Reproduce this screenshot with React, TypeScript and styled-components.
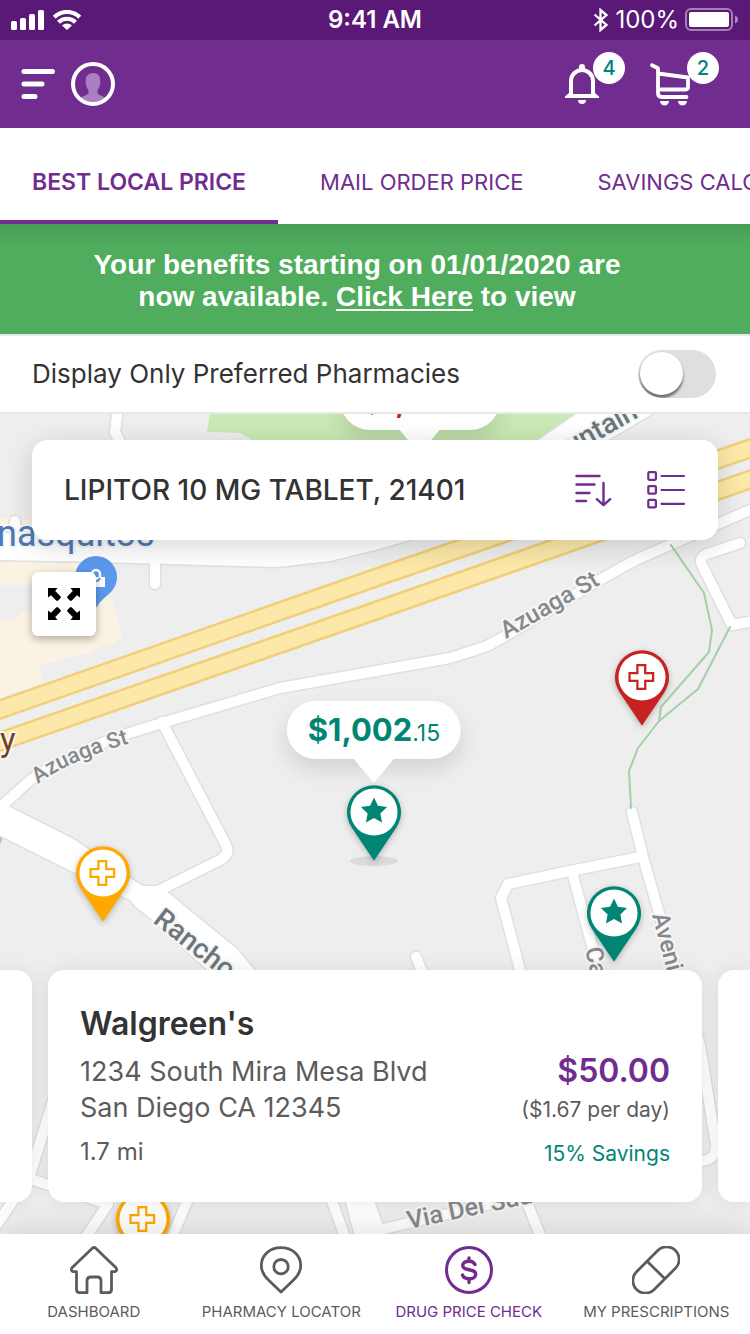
import React, { useState } from "react";
import styled, { createGlobalStyle, css } from "styled-components";

const color = {
  purpleDark: "#5a1976",
  purple: "#702c8f",
  green: "#4fad5d",
  teal: "#008575",
  red: "#c62222",
  amber: "#ffa800",
  ink: "#333333",
  grey: "#5c5c5c",
  line: "#e8e8e8",
};

const GlobalStyle = createGlobalStyle`
  *, *::before, *::after { box-sizing: border-box; }
  body {
    margin: 0;
    font-family: Inter, "Liberation Sans", sans-serif;
    color: ${color.ink};
    background: #ffffff;
  }
  button { border: 0; padding: 0; background: none; font: inherit; color: inherit; cursor: pointer; }
  svg { display: block; }
  h1, h2, p { margin: 0; }
`;

const Screen = styled.div`
  display: flex;
  flex-direction: column;
  min-height: 100vh;
  overflow: hidden;
`;

/* ---------- status bar and header ---------- */

const StatusBar = styled.div`
  display: grid;
  grid-template-columns: 1fr auto 1fr;
  align-items: center;
  height: 40px;
  padding: 0 11px;
  background: ${color.purpleDark};
  color: #ffffff;
  font-size: 24px;
  line-height: 32px;
`;

const StatusGroup = styled.div<{ $end?: boolean }>`
  display: flex;
  align-items: center;
  gap: ${(p) => (p.$end ? 6 : 8)}px;
  justify-content: ${(p) => (p.$end ? "flex-end" : "flex-start")};
`;

const Clock = styled.span`
  font-weight: 600;
`;

const Header = styled.header`
  display: flex;
  align-items: center;
  justify-content: space-between;
  height: 88px;
  padding: 0 58px 0 20px;
  background: ${color.purple};
  color: #ffffff;
`;

const HeaderGroup = styled.div<{ $gap: number }>`
  display: flex;
  align-items: center;
  gap: ${(p) => p.$gap}px;
`;

const IconButton = styled.button`
  position: relative;
  display: block;
`;

const Badge = styled.span`
  position: absolute;
  top: -10px;
  left: 33px;
  width: 32px;
  height: 32px;
  border-radius: 50%;
  background: #ffffff;
  color: ${color.teal};
  font-size: 20px;
  font-weight: 500;
  line-height: 32px;
  text-align: center;
`;

const CartBadge = styled(Badge)`
  left: 39px;
`;

/* ---------- tabs, banner, filter ---------- */

const Tabs = styled.nav`
  display: flex;
  gap: 10px;
  height: 96px;
  overflow: hidden;
  background: #ffffff;
`;

const Tab = styled.a<{ $active?: boolean }>`
  flex: none;
  display: flex;
  align-items: center;
  padding: 16px 32px 0;
  border-bottom: 4px solid ${(p) => (p.$active ? color.purple : "transparent")};
  color: ${color.purple};
  font-size: ${(p) => (p.$active ? 23 : 22)}px;
  font-weight: ${(p) => (p.$active ? 600 : 400)};
  line-height: 32px;
  text-decoration: none;
  white-space: nowrap;
`;

const Banner = styled.p`
  padding: 25px 72px 21px 36px;
  background: linear-gradient(rgba(0, 0, 0, 0.1), rgba(0, 0, 0, 0) 20px), ${color.green};
  color: #ffffff;
  font-family: "Liberation Sans", Arial, sans-serif;
  font-size: 28px;
  font-weight: 700;
  line-height: 32px;
  text-align: center;

  a {
    color: inherit;
    text-decoration-thickness: 2px;
    text-underline-offset: 3px;
  }
`;

const FilterRow = styled.label`
  display: flex;
  align-items: center;
  justify-content: space-between;
  height: 80px;
  padding: 0 34px 0 32px;
  border-top: 2px solid ${color.line};
  border-bottom: 2px solid ${color.line};
  background: #ffffff;
  font-size: 26px;
  line-height: 32px;
`;

const Switch = styled.input`
  appearance: none;
  width: 78px;
  height: 48px;
  margin: 0;
  padding: 2px;
  border-radius: 24px;
  background: #dfdfdf;
  overflow: hidden;
  cursor: pointer;

  &::before {
    content: "";
    display: block;
    width: 43px;
    height: 43px;
    border-radius: 50%;
    background: #ffffff;
    box-shadow: 0 3px 3px rgba(0, 0, 0, 0.55);
  }

  &:checked {
    background: ${color.purple};
  }

  &:checked::before {
    margin-left: auto;
  }
`;

/* ---------- map ---------- */

const MapArea = styled.main`
  position: relative;
  flex: 1;
  display: flex;
  flex-direction: column;
  align-items: stretch;
  min-height: 820px;
  overflow: hidden;
  background: #eeeeee;
`;

const MapDrawing = styled.svg`
  position: absolute;
  inset: 0;
  width: 100%;
  height: 100%;
`;

const Marker = styled.button<{ $x: number; $y: number }>`
  position: absolute;
  left: calc(50% + ${(p) => p.$x}px);
  top: ${(p) => p.$y}px;
  transform: translate(-50%, -100%);
`;

const PinSvg = styled.svg`
  overflow: visible;
  filter: drop-shadow(0 2px 3px rgba(0, 0, 0, 0.25));
`;

const Bubble = styled.div<{ $x: number; $y: number; $tone: string }>`
  position: absolute;
  left: calc(50% + ${(p) => p.$x}px);
  top: ${(p) => p.$y}px;
  transform: translate(-50%, -100%);
  display: flex;
  align-items: baseline;
  height: 58px;
  padding: 0 21px;
  border-radius: 29px;
  background: #ffffff;
  box-shadow: 0 10px 22px rgba(0, 0, 0, 0.12);
  color: ${(p) => p.$tone};
  font-size: 31px;
  font-weight: 700;
  line-height: 58px;
  white-space: nowrap;

  &::after {
    content: "";
    position: absolute;
    top: 100%;
    left: 50%;
    transform: translateX(-50%);
    border: 20px solid transparent;
    border-top: 24px solid #ffffff;
    border-bottom: 0;
  }

  small {
    font-size: 23px;
    font-weight: 400;
  }
`;

const SearchCard = styled.section`
  position: relative;
  display: flex;
  align-items: center;
  gap: 32px;
  height: 100px;
  margin: 26px 32px 0;
  padding: 0 32px;
  border-radius: 16px;
  background: #ffffff;
  box-shadow: 0 6px 28px rgba(0, 0, 0, 0.16);
  color: ${color.purple};
`;

const SearchTitle = styled.h1`
  flex: 1;
  color: ${color.ink};
  font-size: 28px;
  font-weight: 500;
`;

const ExpandButton = styled.button`
  position: relative;
  display: grid;
  place-items: center;
  width: 64px;
  height: 64px;
  margin: 32px;
  border-radius: 6px;
  background: #ffffff;
  box-shadow: 0 3px 8px rgba(0, 0, 0, 0.3);
  color: #000000;
`;

/* ---------- pharmacy cards ---------- */

const Carousel = styled.div`
  position: relative;
  display: grid;
  grid-template-columns: 32px 1fr 32px;
  gap: 16px;
  margin: auto 0 32px;
`;

const cardSurface = css`
  background: #ffffff;
  box-shadow: 0 0 20px rgba(0, 0, 0, 0.09);
`;

const CardEdge = styled.div<{ $side: "left" | "right" }>`
  ${cardSurface}
  border-radius: ${(p) => (p.$side === "left" ? "0 16px 16px 0" : "16px 0 0 16px")};
`;

const Card = styled.article`
  ${cardSurface}
  display: flex;
  justify-content: space-between;
  height: 232px;
  padding: 32px 32px 0;
  border-radius: 16px;
`;

const CardColumn = styled.div<{ $end?: boolean }>`
  display: flex;
  flex-direction: column;
  align-items: ${(p) => (p.$end ? "flex-end" : "flex-start")};
  padding-top: ${(p) => (p.$end ? 48 : 0)}px;
`;

const PharmacyName = styled.h2`
  margin-bottom: 8px;
  color: ${color.ink};
  font-size: 32px;
  font-weight: 600;
  line-height: 44px;
`;

const Address = styled.p`
  color: ${color.grey};
  font-size: 27px;
  line-height: 36px;
`;

const Detail = styled.p<{ $tone?: string }>`
  color: ${(p) => p.$tone ?? color.grey};
  font-size: 21px;
  line-height: 44px;
`;

const Distance = styled.p`
  padding-top: 8px;
  color: ${color.grey};
  font-size: 24px;
  line-height: 36px;
`;

const Price = styled.p`
  margin-bottom: -4px;
  color: ${color.purple};
  font-size: 32px;
  font-weight: 600;
  line-height: 42px;
`;

/* ---------- bottom navigation ---------- */

const BottomNav = styled.nav`
  position: relative;
  display: grid;
  grid-template-columns: repeat(4, 1fr);
  height: 100px;
  background: #ffffff;
  box-shadow: 0 -4px 28px rgba(0, 0, 0, 0.12);
`;

const NavItem = styled.a<{ $active?: boolean }>`
  display: flex;
  flex-direction: column;
  align-items: center;
  gap: 8px;
  padding-top: 12px;
  color: ${(p) => (p.$active ? color.purple : color.grey)};
  font-size: 15px;
  line-height: 20px;
  text-decoration: none;
  white-space: nowrap;
`;

/* ---------- drawings ---------- */

const stroke = {
  fill: "none",
  stroke: "currentColor",
  strokeLinecap: "round" as const,
  strokeLinejoin: "round" as const,
};

const SignalIcon = () => (
  <svg width="34" height="20" viewBox="0 0 34 20" fill="currentColor" aria-hidden="true">
    <rect x="0" y="11" width="6" height="9" rx="1.5" />
    <rect x="9" y="8" width="6" height="12" rx="1.5" />
    <rect x="18" y="4" width="6" height="16" rx="1.5" />
    <rect x="27" y="0" width="6" height="20" rx="1.5" />
  </svg>
);

const WifiIcon = () => (
  <svg width="28" height="20" viewBox="0 0 28 20" aria-hidden="true">
    <g fill="none" stroke="currentColor" strokeWidth="4.2">
      <path d="M1.3 7.200A18 18 0 0 1 26.700 7.200" />
      <path d="M5.500 12.300A12 12 0 0 1 22.500 12.300" />
    </g>
    <path d="M9 15.600a7 7 0 0 1 10 0L14 20z" fill="currentColor" />
  </svg>
);

const BluetoothIcon = () => (
  <svg width="16" height="24" viewBox="0 0 16 24" aria-hidden="true">
    <path d="M1.500 6.500L13.500 17l-6 5V2l6 5L1.500 17.500" fill="none" stroke="currentColor" strokeWidth="2.300" />
  </svg>
);

const BatteryIcon = () => (
  <svg width="54" height="24" viewBox="0 0 54 24" aria-hidden="true">
    <rect x="1" y="1" width="46" height="21" rx="5" fill="none" stroke="currentColor" strokeWidth="2" opacity=".45" />
    <rect x="4" y="4" width="40" height="15" rx="2" fill="currentColor" />
    <path d="M50 7.500c4 1.500 4 6.500 0 8z" fill="currentColor" opacity=".5" />
  </svg>
);

const MenuIcon = () => (
  <svg width="36" height="32" viewBox="0 0 36 32" {...stroke} strokeWidth="5" aria-hidden="true">
    <path d="M4 3.400h28.500M4 16h18M4 28.600h11" />
  </svg>
);

const AvatarIcon = () => (
  <svg width="44" height="44" viewBox="0 0 44 44" aria-hidden="true">
    <path
      d="M22 11c5 0 7.500 3.500 7.300 8.500-.1 4.500-1.300 6.500-2.800 8.500v3c0 2.500 8 3 9.500 6.500-7 5.500-21 5.500-28 0 1.500-3.500 9.500-4 9.500-6.500v-3c-1.500-2-2.700-4-2.800-8.500C14.500 14.500 17 11 22 11z"
      fill="#ac80c0"
    />
    <circle cx="22" cy="22" r="20" fill="none" stroke="currentColor" strokeWidth="4" />
  </svg>
);

const BellIcon = () => (
  <svg width="44" height="44" viewBox="0 0 44 44" aria-hidden="true">
    <g fill="none" stroke="currentColor" strokeWidth="4">
      <path d="M11 33V19a11 11 0 0 1 22 0v14" />
    </g>
    <path d="M19 7V5a3 3 0 0 1 6 0v2zM9 31l-4 3.500V36h34v-1.500L35 31v1H9zM18 38h8a4 4 0 0 1-8 0z" fill="currentColor" />
  </svg>
);

const CartIcon = () => (
  <svg width="44" height="44" viewBox="0 0 44 44" aria-hidden="true">
    <g {...stroke} strokeWidth="3.800">
      <path d="M4 3.200l6 3V31q0 4 4 4h24.500M10 11.500l30 4V25q0 2.500-2.500 2.500H10" />
    </g>
    <path d="M12 39h9a4.500 4.500 0 0 1-9 0zM30 39h9a4.500 4.500 0 0 1-9 0z" fill="currentColor" />
  </svg>
);

const SortIcon = () => (
  <svg width="40" height="40" viewBox="0 0 40 40" {...stroke} strokeWidth="2.400" aria-hidden="true">
    <path d="M2.500 6h23M2.500 14.500h18M2.500 23h13M2.500 31h9.500M29.500 13v22M22.800 29.200l6.700 6 6.700-6" />
  </svg>
);

const ListIcon = () => (
  <svg width="40" height="40" viewBox="0 0 40 40" {...stroke} strokeWidth="2.200" aria-hidden="true">
    <rect x="2.300" y="2.200" width="7.600" height="7.600" rx="1" />
    <rect x="2.300" y="16.100" width="7.600" height="7.600" rx="1" />
    <rect x="2.300" y="29.800" width="7.600" height="7.600" rx="1" />
    <path d="M15.500 6h22.500M15.500 20h22.500M15.500 33.800h22.500" />
  </svg>
);

const ExpandIcon = () => (
  <svg width="32" height="32" viewBox="0 0 32 32" fill="currentColor" aria-hidden="true">
    {[0, 90, 180, 270].map((turn) => (
      <path key={turn} d="M0 0h9.500L7.200 3l5.500 5.400v1.500l-2.800 2.800H8.400L3 7.200 0 9.500z" transform={`rotate(${turn} 16 16)`} />
    ))}
  </svg>
);

const HomeIcon = () => (
  <svg width="48" height="48" viewBox="0 0 48 48" {...stroke} strokeWidth="2.800" aria-hidden="true">
    <path d="M22.300 2.200q1.700-1.400 3.400 0L46 21.800q1.800 2.700-1.200 3.900H41.500V43.500q0 3.200-3.200 3.200H31V35q0-4-4-4h-6q-4 0-4 4v11.700H9.700q-3.200 0-3.200-3.200V25.700H3.200Q.2 24.500 2 21.800z" />
  </svg>
);

const LocatorIcon = () => (
  <svg width="48" height="48" viewBox="0 0 48 48" {...stroke} strokeWidth="2.800" aria-hidden="true">
    <path d="M24 46L12 34.500C6 29 4.300 24 4.300 19.500 4.300 9 13 1.600 24 1.600S43.700 9 43.700 19.500C43.700 24 42 29 36 34.500z" />
    <circle cx="24" cy="20.700" r="7.200" />
  </svg>
);

const DollarIcon = () => (
  <svg width="48" height="48" viewBox="0 0 48 48" {...stroke} strokeWidth="3" aria-hidden="true">
    <circle cx="24" cy="24" r="22.500" />
    <path d="M30 18.500q-1.500-3.300-6-3.300c-4 0-6.300 1.700-6.300 4.300 0 6 13 2.500 13 8.700 0 2.800-2.600 4.600-6.500 4.600-3.400 0-6-1.300-6.700-3.700M24 12v3M24 33v3.500" strokeWidth="3.400" />
  </svg>
);

const PillIcon = () => (
  <svg width="48" height="48" viewBox="0 0 48 48" {...stroke} strokeWidth="2.800" aria-hidden="true">
    <g transform="rotate(-45 24 24)">
      <rect x="-3.500" y="11.500" width="55" height="25" rx="12.500" />
      <path d="M24 11.500v25" />
    </g>
  </svg>
);

type PinKind = "star" | "cross";

const Pin = ({ kind, tone }: { kind: PinKind; tone: string }) => (
  <PinSvg width="54" height="76" viewBox="0 0 55 77" aria-hidden="true">
    <path d="M27.500 77L4.600 42.800A27.500 27.500 0 1 1 50.400 42.800z" fill={tone} />
    <circle cx="27.500" cy="27.300" r="24" fill="#ffffff" />
    {kind === "star" ? (
      <path
        d="M27.500 12.500l4 8.500 9.300 1.200-6.800 6.500 1.700 9.300-8.200-4.500-8.200 4.500 1.700-9.300-6.800-6.500 9.300-1.200z"
        fill={tone}
      />
    ) : (
      <path
        d="M22.800 15.300h8v8h8v8h-8v8h-8v-8h-8v-8h8z"
        fill="none"
        stroke={tone}
        strokeWidth="2.300"
      />
    )}
  </PinSvg>
);

const roads = [
  "M118 408L115 432L122 446",
  "M15 521V545",
  "M155 560V584",
  "M-5 812C15 795 28 780 42 772S90 747 120 736L165 722L280 688L450 658L487 646C540 618 600 577 640 558L720 523L755 508",
  "M162 722L226 845Q230 853 222 859L158 891",
  "M632 812L643 857L668 945L700 1045L716 1145Q717 1159 702 1161",
  "M640 857L570 871L508 884L501 898L524 985",
  "M572 872L600 975",
  "M416 957L430 990",
  "M740 543L707 554Q698 558 702 565L732 625L760 620",
  "M58 1085L30 1175L-8 1232",
  "M30 1179L108 1204L84 1240",
  "M200 1170L171 1240",
  "M328 1190L346 1240",
  "M370 1232L560 1188M526 1200L542 1240",
];

const areas = [
  "M-5 533H80V500H500L410 540L375 550L330 561L277 567L100 562L-5 560Z",
  "M585 408H662L598 446H530Z",
  "M-5 798L12 808L75 840L130 878L143 886H160L238 950L275 995H235L150 918L136 907L130 900L75 873L-5 833Z",
  "M344 1195L356 1240H388L372 1195Z",
];

const Label = ({ at, turn, size, tone = "#85898c", weight = 500, children }: {
  at: [number, number];
  turn: number;
  size: number;
  tone?: string;
  weight?: number;
  children: string;
}) => (
  <text
    transform={`translate(${at[0]} ${at[1]}) rotate(${turn})`}
    fontSize={size}
    fontWeight={weight}
    fill={tone}
  >
    {children}
  </text>
);

const StreetMap = () => (
  <MapDrawing viewBox="0 414 750 820" preserveAspectRatio="xMidYMin slice" role="img" aria-label="Map of nearby pharmacies">
    <g fill="#faf3e4">
      <path d="M0 517L34 521V540H0ZM0 560L82 563L78 585H0Z" />
      <path d="M0 622L20 616V612L96 590L112 600L123 637L116 640L117 643L93 649V652L38 666L44 682L0 698Z" />
    </g>
    <path d="M211 408H596L535 446H262L240 433L207 432Z" fill="#c9eab4" />
    <path d="M0 834Q4 838 0 844Z" fill="#9fcf9f" />

    <g strokeLinejoin="round" strokeLinecap="round">
      <g fill="#e0e0e0" stroke="#e0e0e0" strokeWidth="3">
        {areas.map((d) => <path key={d} d={d} />)}
      </g>
      <g fill="none" stroke="#e0e0e0" strokeWidth="13">
        {roads.map((d) => <path key={d} d={d} />)}
      </g>
      <g fill="#ffffff">
        {areas.map((d) => <path key={d} d={d} />)}
      </g>
      <g fill="none" stroke="#ffffff" strokeWidth="10">
        {roads.map((d) => <path key={d} d={d} />)}
      </g>
      {["M-10 713L375 578L760 445", "M-10 745L375 611L760 476"].map((d) => (
        <g key={d} fill="none">
          <path d={d} stroke="#f0cf78" strokeWidth="20" />
          <path d={d} stroke="#fce9a9" strokeWidth="15" />
        </g>
      ))}
      <g fill="none" stroke="#a3d0a4" strokeWidth="2">
        <path d="M671 545L704 593L712 630L709 652L661 707L659 721L638 748L629 771L631 808" />
        <path d="M730 627L698 689L659 721" />
      </g>
    </g>

    <path d="M97 608C95 597 75 594 75 577A21 21 0 0 1 117 577C117 594 100 597 97 608Z" fill="#5b98ec" />
    <path d="M88 577h17v10H88z" fill="#ffffff" />
    <path d="M92 577v-3a4 4 0 0 1 8 0v3" fill="none" stroke="#ffffff" strokeWidth="2.500" />
    <path d="M93 578q4 6 7 0" fill="none" stroke="#5b98ec" strokeWidth="2" />

    <g
      fontFamily="Roboto, sans-serif"
      stroke="#f6f6f6"
      strokeWidth="4"
      strokeLinejoin="round"
      paintOrder="stroke"
    >
      <Label at={[-3, 546]} turn={0} size={36} tone="#4f78b6" weight={400}>nasquitos</Label>
      <Label at={[0, 751]} turn={0} size={33} tone="#77441a" weight={400}>y</Label>
      <path id="azuaga-curve" d="M38 784Q72 757 160 735" fill="none" stroke="none" />
      <text fontSize="22" fontWeight="500" fill="#85898c">
        <textPath href="#azuaga-curve">Azuaga St</textPath>
      </text>
      <Label at={[506, 639]} turn={-30} size={24}>Azuaga St</Label>
      <Label at={[571, 455]} turn={-29} size={28} tone="#6b777c">untain</Label>
      <Label at={[152, 922]} turn={38} size={28} tone="#6b777c">Rancho</Label>
      <Label at={[652, 915]} turn={75} size={24}>Avenida</Label>
      <Label at={[585, 949]} turn={77} size={24}>Calle</Label>
      <Label at={[409, 1229]} turn={-12} size={25}>Via Del Sud</Label>
      <Label at={[694, 1062]} turn={-20} size={25}>r</Label>
    </g>

    <ellipse cx="374" cy="861" rx="24" ry="5" fill="#d9dada" />
  </MapDrawing>
);

/* Marker tips, measured from the middle of the map's top edge. */
const pins: { label: string; kind: PinKind; tone: string; x: number; y: number }[] = [
  { label: "Pharmacy, high price", kind: "cross", tone: color.red, x: 267, y: 312 },
  { label: "Preferred pharmacy", kind: "star", tone: color.teal, x: -1, y: 447 },
  { label: "Pharmacy, medium price", kind: "cross", tone: color.amber, x: -272, y: 508 },
  { label: "Preferred pharmacy", kind: "star", tone: color.teal, x: 239, y: 548 },
  { label: "Pharmacy, medium price", kind: "cross", tone: color.amber, x: -232, y: 854 },
];

export default function App() {
  const [preferredOnly, setPreferredOnly] = useState(false);

  return (
    <>
      <GlobalStyle />
      <Screen>
        <StatusBar>
          <StatusGroup>
            <SignalIcon />
            <WifiIcon />
          </StatusGroup>
          <Clock>9:41 AM</Clock>
          <StatusGroup $end>
            <BluetoothIcon />
            <span>100%</span>
            <BatteryIcon />
          </StatusGroup>
        </StatusBar>

        <Header>
          <HeaderGroup $gap={15}>
            <IconButton aria-label="Menu"><MenuIcon /></IconButton>
            <IconButton aria-label="Profile"><AvatarIcon /></IconButton>
          </HeaderGroup>
          <HeaderGroup $gap={44}>
            <IconButton aria-label="Notifications">
              <BellIcon />
              <Badge>4</Badge>
            </IconButton>
            <IconButton aria-label="Cart">
              <CartIcon />
              <CartBadge>2</CartBadge>
            </IconButton>
          </HeaderGroup>
        </Header>

        <Tabs>
          <Tab href="#local" $active>BEST LOCAL PRICE</Tab>
          <Tab href="#mail">MAIL ORDER PRICE</Tab>
          <Tab href="#savings">SAVINGS CALCULATOR</Tab>
        </Tabs>

        <Banner>
          Your benefits starting on 01/01/2020 are<br />
          now available. <a href="#benefits">Click Here</a> to view
        </Banner>

        <FilterRow>
          Display Only Preferred Pharmacies
          <Switch
            type="checkbox"
            role="switch"
            checked={preferredOnly}
            onChange={(e) => setPreferredOnly(e.target.checked)}
          />
        </FilterRow>

        <MapArea>
          <StreetMap />
          <Bubble $x={45} $y={16} $tone={color.red}>$1,110<small>.15</small></Bubble>
          <Bubble $x={-1} $y={345} $tone={color.teal}>$1,002<small>.15</small></Bubble>
          {pins.map((pin) => (
            <Marker key={`${pin.x},${pin.y}`} $x={pin.x} $y={pin.y} aria-label={pin.label}>
              <Pin kind={pin.kind} tone={pin.tone} />
            </Marker>
          ))}

          <SearchCard>
            <SearchTitle>LIPITOR 10 MG TABLET, 21401</SearchTitle>
            <IconButton aria-label="Sort"><SortIcon /></IconButton>
            <IconButton aria-label="List view"><ListIcon /></IconButton>
          </SearchCard>
          <ExpandButton aria-label="Expand map"><ExpandIcon /></ExpandButton>

          <Carousel>
            <CardEdge $side="left" />
            <Card>
              <CardColumn>
                <PharmacyName>Walgreen's</PharmacyName>
                <Address>1234 South Mira Mesa Blvd</Address>
                <Address>San Diego CA 12345</Address>
                <Distance>1.7 mi</Distance>
              </CardColumn>
              <CardColumn $end>
                <Price>$50.00</Price>
                <Detail>($1.67 per day)</Detail>
                <Detail $tone={color.teal}>15% Savings</Detail>
              </CardColumn>
            </Card>
            <CardEdge $side="right" />
          </Carousel>
        </MapArea>

        <BottomNav>
          <NavItem href="#dashboard"><HomeIcon />DASHBOARD</NavItem>
          <NavItem href="#locator"><LocatorIcon />PHARMACY LOCATOR</NavItem>
          <NavItem href="#price" $active><DollarIcon />DRUG PRICE CHECK</NavItem>
          <NavItem href="#prescriptions"><PillIcon />MY PRESCRIPTIONS</NavItem>
        </BottomNav>
      </Screen>
    </>
  );
}
